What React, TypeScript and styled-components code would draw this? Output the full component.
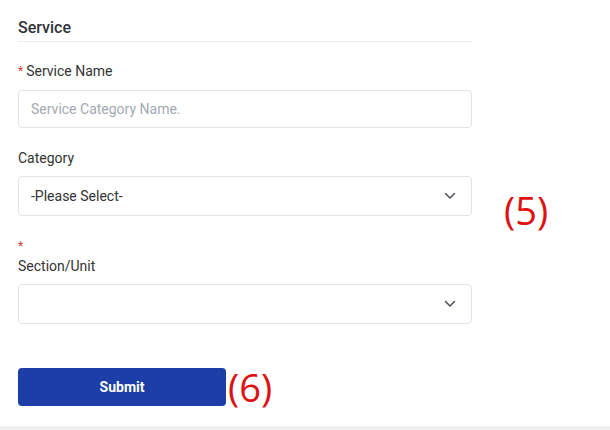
import React from 'react'
import styled, { createGlobalStyle } from 'styled-components'

const GlobalStyle = createGlobalStyle`
  html, body {
    margin: 0;
    padding: 0;
    background: #f0f0f0;
  }
  body {
    font-family: Roboto, 'Liberation Sans', Arial, sans-serif;
    color: #333;
  }
`

const Card = styled.div`
  background: #fff;
  height: 426px;
  box-sizing: border-box;
  padding: 19px 0 0 18px;
`

const Body = styled.div`
  display: flex;
  align-items: flex-start;
`

const Form = styled.form`
  width: 454px;
  display: flex;
  flex-direction: column;
`

const Heading = styled.h3`
  margin: 0;
  font-size: 16px;
  font-weight: 500;
  line-height: 18px;
  color: #2f3237;
  padding-bottom: 4px;
  border-bottom: 1px solid #ececec;
`

const Field = styled.div<{ $gap?: number }>`
  display: flex;
  flex-direction: column;
  margin-top: ${(p) => p.$gap ?? 20}px;
`

const Label = styled.label<{ $gap?: number }>`
  font-size: 14px;
  line-height: 16px;
  color: #333;
  margin-bottom: ${(p) => p.$gap ?? 11}px;
`

const Star = styled.span<{ $block?: boolean }>`
  color: #d43a3a;
  font-size: 12px;
  display: ${(p) => (p.$block ? 'block' : 'inline')};
  margin-right: 3px;
  line-height: ${(p) => (p.$block ? '23px' : '16px')};
  vertical-align: top;
`

const Input = styled.input`
  box-sizing: border-box;
  height: 38px;
  width: 100%;
  border: 1px solid #e3e3e3;
  border-radius: 4px;
  padding: 0 12px;
  font-family: Roboto, 'Liberation Sans', Arial, sans-serif;
  font-size: 14px;
  color: #333;
  outline: none;
  &::placeholder {
    color: #a3a9b2;
  }
`

const SelectBox = styled.div`
  box-sizing: border-box;
  height: 40px;
  border: 1px solid #e3e3e3;
  border-radius: 4px;
  padding: 0 15px 0 12px;
  display: flex;
  align-items: center;
  justify-content: space-between;
  font-size: 14px;
  color: #333;
`

const Actions = styled.div`
  display: flex;
  align-items: center;
  margin-top: 43px;
  gap: 2px;
`

const SubmitButton = styled.button`
  width: 208px;
  height: 38px;
  background: #1d3ea7;
  color: #fff;
  border: none;
  border-radius: 4px;
  font-family: Roboto, 'Liberation Sans', Arial, sans-serif;
  font-weight: 700;
  font-size: 14px;
`

const Note = styled.span<{ $top?: number }>`
  display: inline-block;
  font-family: 'Open Sans', 'Noto Sans', sans-serif;
  font-size: 38px;
  line-height: 40px;
  color: #e01010;
  margin-top: ${(p) => p.$top ?? 0}px;
`

const Side = styled.div`
  padding-left: 32px;
`

const Chevron = () => (
  <svg width="12" height="8" viewBox="0 0 12 8" fill="none">
    <path d="M1.5 1.5 6 6l4.5-4.5" stroke="#4a4f57" strokeWidth="1.5" strokeLinecap="round" strokeLinejoin="round" />
  </svg>
)

export default function App() {
  return (
    <>
      <GlobalStyle />
      <Card>
        <Body>
          <Form onSubmit={(e) => e.preventDefault()}>
            <Heading>Service</Heading>
            <Field $gap={21}>
              <Label>
                <Star>*</Star>Service Name
              </Label>
              <Input placeholder="Service Category Name." />
            </Field>
            <Field $gap={22}>
              <Label $gap={10}>Category</Label>
              <SelectBox>
                <span>-Please Select-</span>
                <Chevron />
              </SelectBox>
            </Field>
            <Field $gap={19}>
              <Label $gap={10}>
                <Star $block>*</Star>Section/Unit
              </Label>
              <SelectBox>
                <span />
                <Chevron />
              </SelectBox>
            </Field>
            <Actions>
              <SubmitButton type="submit">Submit</SubmitButton>
              <Note>(6)</Note>
            </Actions>
          </Form>
          <Side>
            <Note $top={171}>(5)</Note>
          </Side>
        </Body>
      </Card>
    </>
  )
}
